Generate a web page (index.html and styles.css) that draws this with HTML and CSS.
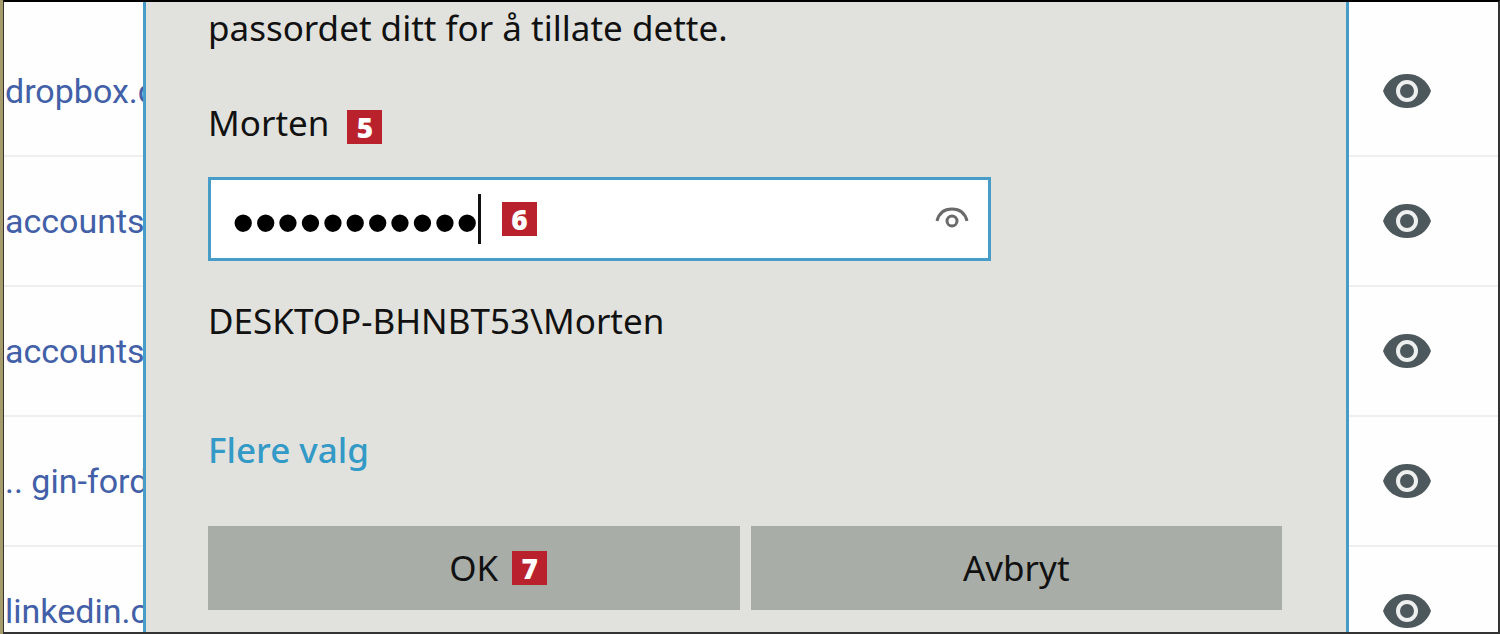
FILE: index.html
```html
<!DOCTYPE html>
<html lang="no">
<head>
<meta charset="utf-8">
<title>Windows-sikkerhet</title>
<link rel="stylesheet" href="styles.css">
</head>
<body>
<svg class="sprite" aria-hidden="true">
  <symbol id="eye" viewBox="0 0 48 36">
    <path fill="#4d585c" d="M0 18C4 7 13 1 24 1s20 6 24 17c-4 11-13 17-24 17S4 29 0 18z"/>
    <circle cx="24" cy="18" r="9" fill="#4d585c" stroke="#eef0f0" stroke-width="4"/>
  </symbol>
</svg>
<div class="frame">
  <ul class="sites">
    <li class="site"><a class="site-link" href="#">dropbox.com</a><button class="reveal" aria-label="Vis passord"><svg class="eye"><use href="#eye"/></svg></button></li>
    <li class="site"><a class="site-link" href="#">accounts</a><button class="reveal" aria-label="Vis passord"><svg class="eye"><use href="#eye"/></svg></button></li>
    <li class="site"><a class="site-link" href="#">accounts</a><button class="reveal" aria-label="Vis passord"><svg class="eye"><use href="#eye"/></svg></button></li>
    <li class="site"><a class="site-link" href="#">.. gin-ford</a><button class="reveal" aria-label="Vis passord"><svg class="eye"><use href="#eye"/></svg></button></li>
    <li class="site"><a class="site-link" href="#">linkedin.com</a><button class="reveal" aria-label="Vis passord"><svg class="eye"><use href="#eye"/></svg></button></li>
  </ul>
  <form class="dialog">
    <p class="message">passordet ditt for å tillate dette.</p>
    <div class="user"><label for="password">Morten</label><span class="badge">5</span></div>
    <div class="field">
      <input class="password" id="password" type="password" value="passord1234">
      <div class="field-tools">
        <span class="caret"></span>
        <span class="badge">6</span>
        <button class="peek" type="button" aria-label="Vis passord">
          <svg width="34" height="24" viewBox="0 0 34 24" fill="none" stroke="#6a6a6a"><path stroke-width="3" d="M2 14C4 6 9 2 17 2s13 4 15 12"/><circle cx="17" cy="14" r="5" stroke-width="3"/></svg>
        </button>
      </div>
    </div>
    <p class="account">DESKTOP-BHNBT53\Morten</p>
    <a class="more" href="#">Flere valg</a>
    <div class="actions">
      <button class="action" type="button"><span class="marked">OK<span class="badge">7</span></span></button>
      <button class="action" type="button">Avbryt</button>
    </div>
  </form>
</div>
</body>
</html>
```
FILE: styles.css
```css
* { box-sizing: border-box; }
body {
  margin: 0;
  background: #a59b6c;
  font: 35px/44px "Noto Sans", "Open Sans", sans-serif;
  color: #111;
}
p { margin: 0; }
button { border: 0; padding: 0; background: none; font: inherit; color: inherit; }
.sprite { position: absolute; width: 0; height: 0; }
.frame {
  position: relative;
  height: 100vh;
  margin-left: 3px;
  overflow: hidden;
  background: #fefefe;
  border: 2px solid #333;
  border-top-color: #000;
  border-left-width: 1px;
}
.sites { margin: 0; padding: 25px 0 0; list-style: none; }
.site {
  display: flex;
  align-items: center;
  justify-content: space-between;
  height: 130px;
  padding: 0 67px 0 1px;
  border-bottom: 2px solid #f0eeee;
}
.site-link {
  font-family: Roboto, sans-serif;
  font-size: 34px;
  color: #4260a8;
  text-decoration: none;
}
.reveal, .eye { display: block; width: 48px; height: 36px; }
.dialog {
  position: absolute;
  top: 0;
  bottom: -2px;
  left: 139px;
  right: 149px;
  padding: 4px 64px 0 62px;
  background: #e1e2dd;
  border: solid #489cc8;
  border-width: 0 3px;
}
.user { display: flex; align-items: center; gap: 18px; margin-top: 51px; }
.badge {
  display: flex;
  align-items: center;
  justify-content: center;
  width: 35px;
  height: 34px;
  background: #b9222d;
  color: #fff;
  font: 800 28px/34px "Open Sans", sans-serif;
}
.user .badge { margin-top: 8px; }
.field { display: grid; max-width: 783px; height: 84px; margin-top: 32px; }
.password, .field-tools { grid-area: 1 / 1; min-width: 0; }
.password {
  width: 100%;
  height: 84px;
  padding: 8px 80px 0 21px;
  border: 3px solid #489cc8;
  background: #fff;
  color: #000;
  font: 64px "Liberation Sans", sans-serif;
  outline: 0;
}
.field-tools { z-index: 1; display: flex; align-items: center; padding: 0 22px 0 270px; pointer-events: none; }
.caret { width: 3px; height: 50px; margin-right: 21px; background: #111; }
.peek { display: flex; margin-left: auto; pointer-events: auto; }
.account { margin-top: 38px; }
.more { display: block; width: max-content; margin-top: 85px; color: #3399c6; font-weight: 500; text-decoration: none; }
.actions { display: grid; grid-template-columns: 1fr 1fr; gap: 11px; margin-top: 54px; }
.action {
  display: flex;
  align-items: center;
  justify-content: center;
  height: 84px;
  background: #a8ada8;
}
.marked { position: relative; }
.marked .badge { position: absolute; top: 5px; left: 100%; margin-left: 14px; }
```
